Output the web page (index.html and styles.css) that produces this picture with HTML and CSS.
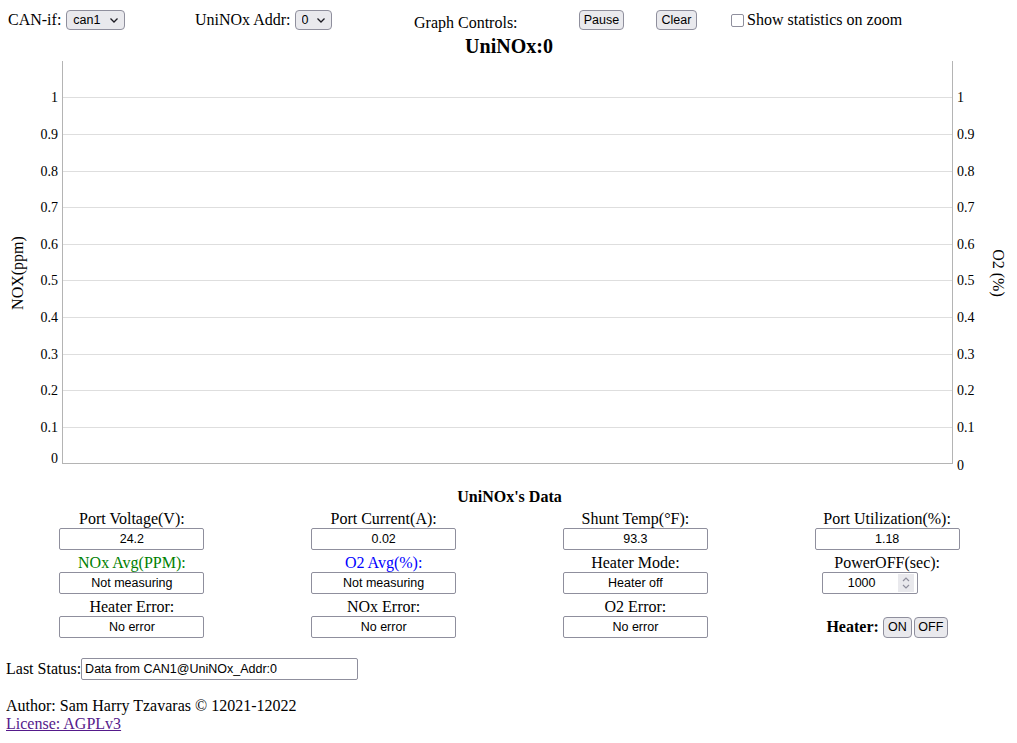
FILE: index.html
```html
<!DOCTYPE html>
<html lang="en">
<head>
<meta charset="utf-8">
<title>UniNOx</title>
<link rel="stylesheet" href="styles.css">
</head>
<body>
<div class="toolbar">
  <div class="tb-group g-can">
    <label class="tb-label" for="canif">CAN-if:</label>
    <span class="sel-wrap sel-can">
      <select id="canif" class="sel"><option>can1</option></select>
      <svg class="chev" width="8" height="5" viewBox="0 0 8 5"><path d="M0.5 0.5 L4 4 L7.5 0.5" fill="none" stroke="#1c1b22" stroke-width="1.3"/></svg>
    </span>
  </div>
  <div class="tb-group g-addr">
    <label class="tb-label" for="addr">UniNOx Addr:</label>
    <span class="sel-wrap sel-addr">
      <select id="addr" class="sel"><option>0</option></select>
      <svg class="chev" width="8" height="5" viewBox="0 0 8 5"><path d="M0.5 0.5 L4 4 L7.5 0.5" fill="none" stroke="#1c1b22" stroke-width="1.3"/></svg>
    </span>
  </div>
  <div class="tb-group g-graph"><span class="graph-label">Graph Controls:</span></div>
  <div class="tb-group g-pause"><button class="btn btn-pause" type="button">Pause</button></div>
  <div class="tb-group g-clear"><button class="btn btn-clear" type="button">Clear</button></div>
  <div class="tb-group g-stats">
    <input class="chk" type="checkbox" id="stats">
    <label class="tb-label" for="stats">Show statistics on zoom</label>
  </div>
</div>

<div class="chart-title">UniNOx:0</div>

<svg class="chart" width="1007" height="429" viewBox="6 58 1007 429">
  <g class="grid" stroke="#dedede" stroke-width="1">
    <line x1="63" y1="97.5" x2="952" y2="97.5"/>
    <line x1="63" y1="134.5" x2="952" y2="134.5"/>
    <line x1="63" y1="171.5" x2="952" y2="171.5"/>
    <line x1="63" y1="207.5" x2="952" y2="207.5"/>
    <line x1="63" y1="244.5" x2="952" y2="244.5"/>
    <line x1="63" y1="280.5" x2="952" y2="280.5"/>
    <line x1="63" y1="317.5" x2="952" y2="317.5"/>
    <line x1="63" y1="354.5" x2="952" y2="354.5"/>
    <line x1="63" y1="390.5" x2="952" y2="390.5"/>
    <line x1="63" y1="427.5" x2="952" y2="427.5"/>
  </g>
  <g class="axes" stroke="#b4b4b4" stroke-width="1" fill="none">
    <line x1="62.5" y1="61" x2="62.5" y2="464"/>
    <line x1="62" y1="463.5" x2="953" y2="463.5"/>
    <line x1="952.5" y1="61" x2="952.5" y2="464"/>
  </g>
  <g class="ticks-left" text-anchor="end">
    <text x="58" y="102">1</text>
    <text x="58" y="139">0.9</text>
    <text x="58" y="176">0.8</text>
    <text x="58" y="212">0.7</text>
    <text x="58" y="249">0.6</text>
    <text x="58" y="285">0.5</text>
    <text x="58" y="322">0.4</text>
    <text x="58" y="359">0.3</text>
    <text x="58" y="395">0.2</text>
    <text x="58" y="432">0.1</text>
    <text x="58" y="463">0</text>
  </g>
  <g class="ticks-right" text-anchor="start">
    <text x="957" y="102">1</text>
    <text x="957" y="139">0.9</text>
    <text x="957" y="176">0.8</text>
    <text x="957" y="212">0.7</text>
    <text x="957" y="249">0.6</text>
    <text x="957" y="285">0.5</text>
    <text x="957" y="322">0.4</text>
    <text x="957" y="359">0.3</text>
    <text x="957" y="395">0.2</text>
    <text x="957" y="432">0.1</text>
    <text x="957" y="470">0</text>
  </g>
  <text class="axis-label" x="17" y="279" text-anchor="middle" transform="rotate(-90 17 273)">NOX(ppm)</text>
  <text class="axis-label" x="998" y="278" text-anchor="middle" transform="rotate(90 998 273)">O2 (%)</text>
</svg>

<div class="data-title">UniNOx's Data</div>
<div class="data-grid">
  <div class="cell"><div class="lbl">Port Voltage(V):</div><input class="val" type="text" value="24.2" readonly></div>
  <div class="cell"><div class="lbl">Port Current(A):</div><input class="val" type="text" value="0.02" readonly></div>
  <div class="cell"><div class="lbl">Shunt Temp(°F):</div><input class="val" type="text" value="93.3" readonly></div>
  <div class="cell"><div class="lbl">Port Utilization(%):</div><input class="val" type="text" value="1.18" readonly></div>

  <div class="cell"><div class="lbl lbl-nox">NOx Avg(PPM):</div><input class="val" type="text" value="Not measuring" readonly></div>
  <div class="cell"><div class="lbl lbl-o2">O2 Avg(%):</div><input class="val" type="text" value="Not measuring" readonly></div>
  <div class="cell"><div class="lbl">Heater Mode:</div><input class="val" type="text" value="Heater off" readonly></div>
  <div class="cell"><div class="lbl">PowerOFF(sec):</div>
    <div class="numbox">
      <input class="num-input" type="text" value="1000">
      <span class="spin">
        <svg width="16" height="18" viewBox="0 0 16 18">
          <path d="M5 7 L8 4 L11 7" fill="none" stroke="#8f8f9d" stroke-width="1.2"/>
          <path d="M5 11 L8 14 L11 11" fill="none" stroke="#8f8f9d" stroke-width="1.2"/>
        </svg>
      </span>
    </div>
  </div>

  <div class="cell"><div class="lbl">Heater Error:</div><input class="val" type="text" value="No error" readonly></div>
  <div class="cell"><div class="lbl">NOx Error:</div><input class="val" type="text" value="No error" readonly></div>
  <div class="cell"><div class="lbl">O2 Error:</div><input class="val" type="text" value="No error" readonly></div>
  <div class="cell"><div class="lbl"></div>
    <div class="heater">
      <span class="heater-label">Heater:</span>
      <button class="btn btn-on" type="button">ON</button>
      <button class="btn btn-off" type="button">OFF</button>
    </div>
  </div>
</div>

<div class="status">
  <label class="status-label" for="laststatus">Last Status:</label>
  <input class="status-input" id="laststatus" type="text" value="Data from CAN1@UniNOx_Addr:0" readonly>
</div>

<div class="footer">
  <div class="author">Author: Sam Harry Tzavaras © 12021-12022</div>
  <a class="license" href="#license">License: AGPLv3</a>
</div>
</body>
</html>
```

FILE: styles.css
```css
html, body {
  background: #ffffff;
}

body {
  margin: 8px 4px 8px 6px;
  font-family: "Liberation Serif", "Times New Roman", serif;
  font-size: 16px;
  color: #000000;
}

/* ---------- top toolbar ---------- */
.toolbar {
  display: flex;
  align-items: center;
  height: 22px;
  margin-top: 1px;
}

.tb-group {
  display: flex;
  align-items: center;
  flex: none;
  white-space: nowrap;
}

.g-can { width: 189px; padding-left: 2px; box-sizing: border-box; }
.g-addr { width: 219px; }
.g-graph { width: 165px; }
.g-pause { width: 77px; }
.g-clear { width: 71px; }
.g-stats { flex: 1; }

.tb-label {
  line-height: 18px;
}

.graph-label {
  line-height: 18px;
  margin-top: 6px;
}

.sel-wrap {
  position: relative;
  display: inline-block;
  height: 20px;
}

.sel-can { margin-left: 5px; width: 59px; }
.sel-addr { margin-left: 4px; width: 37px; }

.sel {
  appearance: none;
  -webkit-appearance: none;
  width: 100%;
  height: 20px;
  box-sizing: border-box;
  margin: 0;
  padding: 0 0 0 6px;
  border: 1px solid #8f8f9d;
  border-radius: 4px;
  background: #e9e9ed;
  color: #000000;
  font-family: "Liberation Sans", Arial, sans-serif;
  font-size: 12.5px;
  line-height: 18px;
}

.chev {
  position: absolute;
  right: 7px;
  top: 8px;
  pointer-events: none;
}

.btn {
  appearance: none;
  -webkit-appearance: none;
  box-sizing: border-box;
  margin: 0;
  padding: 0;
  border: 1px solid #8f8f9d;
  border-radius: 4px;
  background: #e9e9ed;
  color: #000000;
  font-family: "Liberation Sans", Arial, sans-serif;
  font-size: 12.5px;
  line-height: 18px;
  text-align: center;
}

.btn-pause { width: 45px; height: 20px; }
.btn-clear { width: 41px; height: 20px; }

.chk {
  appearance: none;
  -webkit-appearance: none;
  width: 13px;
  height: 13px;
  box-sizing: border-box;
  margin: 0 3px 0 4px;
  border: 1px solid #8f8f9d;
  border-radius: 2px;
  background: #ffffff;
}

/* ---------- chart ---------- */
.chart-title {
  margin-top: 3px;
  padding: 0 57px 0 56px;
  text-align: center;
  font-weight: bold;
  font-size: 20px;
  line-height: 24px;
}

.chart {
  display: block;
}

.chart text {
  font-family: "Liberation Serif", "Times New Roman", serif;
  font-size: 14px;
  fill: #000000;
}

.chart .axis-label {
  font-size: 16px;
}

/* ---------- data grid ---------- */
.data-title {
  margin-top: 1px;
  text-align: center;
  font-weight: bold;
  line-height: 18px;
}

.data-grid {
  display: grid;
  grid-template-columns: repeat(4, 1fr);
  row-gap: 4px;
  margin-top: 4px;
}

.cell {
  display: flex;
  flex-direction: column;
  align-items: center;
}

.lbl {
  height: 18px;
  line-height: 18px;
  white-space: nowrap;
}

.lbl-nox { color: #008000; }
.lbl-o2 { color: #0000ff; }

.val {
  width: 145px;
  height: 22px;
  box-sizing: border-box;
  margin: 0;
  padding: 0 2px;
  border: 1px solid #8f8f9d;
  border-radius: 2px;
  background: #ffffff;
  color: #000000;
  text-align: center;
  font-family: "Liberation Sans", Arial, sans-serif;
  font-size: 12.5px;
  outline: none;
}

.numbox {
  display: flex;
  align-items: center;
  width: 96px;
  height: 22px;
  box-sizing: border-box;
  margin-right: 34px;
  border: 1px solid #8f8f9d;
  border-radius: 2px;
  background: #ffffff;
}

.num-input {
  flex: 1;
  min-width: 0;
  height: 20px;
  box-sizing: border-box;
  margin: 0;
  padding: 0 0 0 2px;
  border: none;
  background: transparent;
  color: #000000;
  text-align: center;
  font-family: "Liberation Sans", Arial, sans-serif;
  font-size: 12.5px;
  outline: none;
}

.spin {
  display: flex;
  width: 16px;
  height: 18px;
  margin-right: 3px;
  background: #e9e9ed;
}

.heater {
  display: flex;
  align-items: center;
  gap: 2px;
  height: 22px;
}

.heater-label {
  font-weight: bold;
  margin-right: 2px;
}

.btn-on { width: 29px; height: 21px; }
.btn-off { width: 34px; height: 21px; }

/* ---------- status + footer ---------- */
.status {
  display: flex;
  align-items: center;
  height: 22px;
  margin-top: 20px;
}

.status-input {
  width: 277px;
  height: 22px;
  box-sizing: border-box;
  margin: 0;
  padding: 0 3px;
  border: 1px solid #8f8f9d;
  border-radius: 2px;
  background: #ffffff;
  color: #000000;
  font-family: "Liberation Sans", Arial, sans-serif;
  font-size: 12.5px;
  outline: none;
}

.footer {
  margin-top: 17px;
  line-height: 18px;
}

.license {
  color: #551a8b;
  text-decoration: underline;
}
```
